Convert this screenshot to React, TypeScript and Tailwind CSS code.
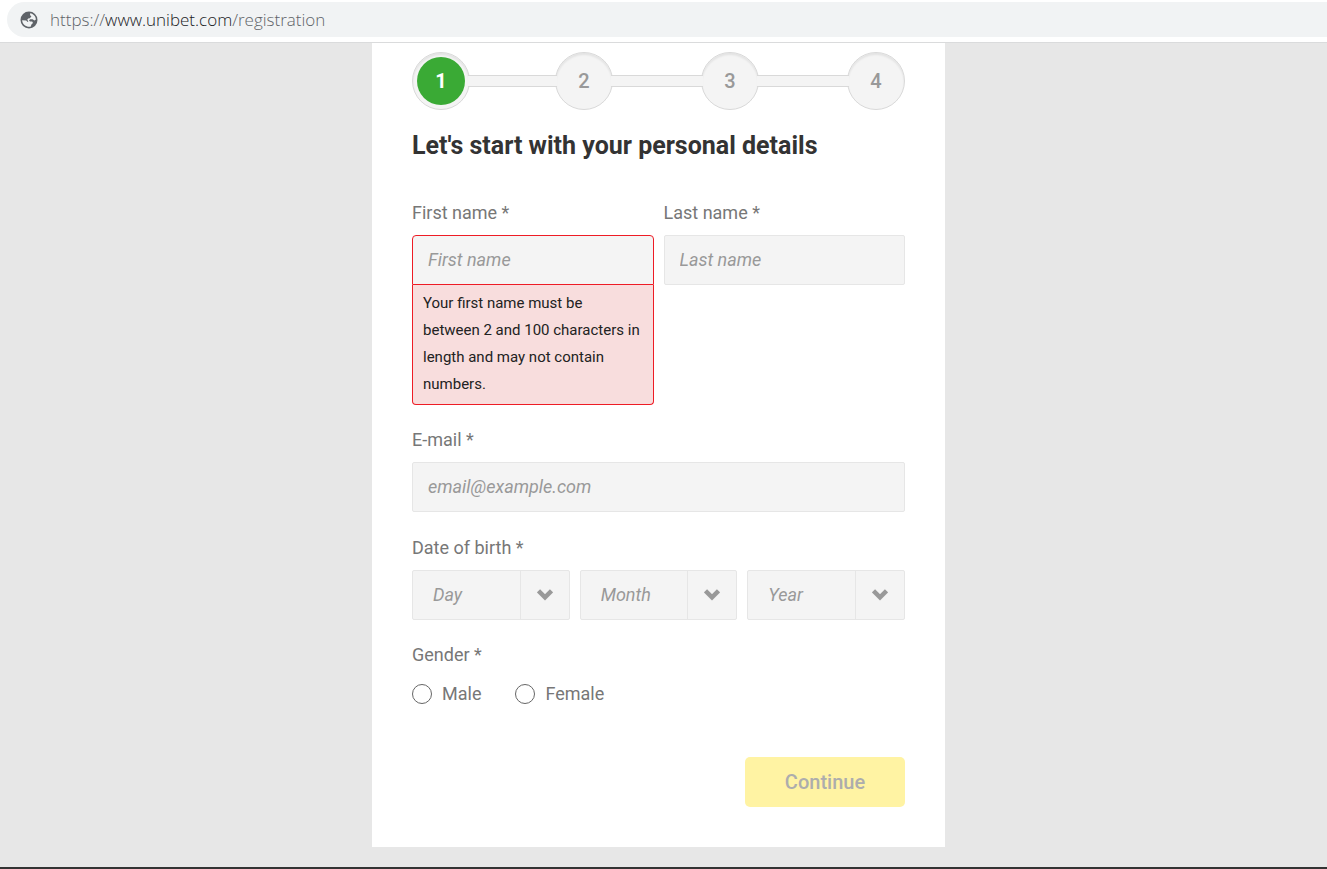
import React from 'react';

const labelClass = 'block mb-[9px] text-lg leading-[26px] text-[#777777]';
const inputClass =
  'block w-full h-[50px] pl-[15px] pr-4 pb-[2px] text-lg italic bg-[#f4f4f4] border text-[#333333] placeholder:text-[#999999] outline-none';

const steps = [
  { number: 1, active: true, line: 'grow-[85]' },
  { number: 2, active: false, line: 'grow-[88]' },
  { number: 3, active: false, line: 'grow-[88]' },
  { number: 4, active: false, line: '' }
];

const GlobeIcon: React.FC = () => (
  <svg width="20" height="20" viewBox="0 0 20 20" aria-hidden="true">
    <circle cx="10" cy="10" r="8.5" fill="#5f6368" />
    <path
      d="M11.2 3.2C14.4 3.7 16.8 6.4 16.9 9.6L15.4 10.4 13.6 9.2H11.2L10 10.4 11 11.6H13.2L14 13 12.6 14.2 11.6 16.7C7.4 17.4 3.4 14.4 3.1 10.2L7.2 10.4 8.6 12 9.4 11.2 8.2 9.8 9.2 8.6 10.8 8.2 12.4 6.4 11 5Z"
      fill="#f1f3f4"
    />
  </svg>
);

const AddressBar: React.FC = () => (
  <header className="pl-[7px] pt-[2px] pb-[5px] bg-white border-b border-[#dadbdc]">
    <div className="flex items-center h-[35px] pl-3 rounded-l-full bg-[#f1f3f4]">
      <GlobeIcon />
      <p className="ml-[11px] font-['Open_Sans','Noto_Sans',sans-serif] font-light text-[17px] text-[#5f6368]">
        https://<span className="text-[#202124]">www.unibet.com</span>/registration
      </p>
    </div>
  </header>
);

const Stepper: React.FC = () => (
  <ol className="flex items-center">
    {steps.map((step, index) => (
      <React.Fragment key={step.number}>
        <li
          className="flex items-center justify-center size-[58px] shrink-0 rounded-full border border-[#d9d9d9] bg-[#f4f4f4] shadow-[inset_0_2px_2px_rgba(0,0,0,0.07)]"
          aria-current={step.active ? 'step' : undefined}
        >
          <span
            className={`flex items-center justify-center size-12 rounded-full text-xl ${
              step.active ? 'bg-[#3aaa35] font-bold text-white' : 'font-medium text-[#999999]'
            }`}
          >
            {step.number}
          </span>
        </li>
        {index < steps.length - 1 && (
          <li
            aria-hidden="true"
            className={`relative basis-0 -mx-[2px] h-3 bg-[#f4f4f4] border-y border-[#d9d9d9] ${step.line}`}
          />
        )}
      </React.Fragment>
    ))}
  </ol>
);

const DateSelect: React.FC<{ name: string }> = ({ name }) => (
  <div className="relative">
    <select
      aria-label={name}
      className="block w-full h-[50px] pl-5 pr-[50px] appearance-none rounded-xs border border-[#e6e6e6] bg-[#f4f4f4] text-lg italic text-[#999999] outline-none"
    >
      <option>{name}</option>
    </select>
    {/* Arrow sits over the select */}
    <span className="absolute right-px inset-y-px flex items-center justify-center w-[49px] border-l border-[#e6e6e6] pointer-events-none">
      <svg width="16" height="12" viewBox="0 0 16 12" fill="none" stroke="#999999" strokeWidth="4.5">
        <path d="M1.5 1.8 8 8.3 14.5 1.8" />
      </svg>
    </span>
  </div>
);

const Registration: React.FC = () => (
  <form className="w-full max-w-[573px] mx-auto px-10 pt-[9px] pb-10 bg-white">
    <Stepper />

    <h1 className="mt-[21px] text-[25px] leading-[30px] font-bold text-[#333333]">
      Let's start with your personal details
    </h1>

    <div className="grid grid-cols-2 items-start gap-2.5 mt-[39px]">
      <div>
        <label htmlFor="first-name" className={labelClass}>First name *</label>
        <input
          id="first-name"
          type="text"
          placeholder="First name"
          aria-invalid="true"
          aria-describedby="first-name-error"
          className={`${inputClass} rounded-t border-[#ee1c25]`}
        />
        <p
          id="first-name-error"
          className="px-2.5 pt-[5px] pb-[6px] rounded-b border border-t-0 border-[#ee1c25] bg-[#f8dddd] text-[15px] leading-[27px] text-[#222222]"
        >
          Your first name must be between 2 and 100 characters in length and may not contain numbers.
        </p>
      </div>
      <div>
        <label htmlFor="last-name" className={labelClass}>Last name *</label>
        <input
          id="last-name"
          type="text"
          placeholder="Last name"
          className={`${inputClass} rounded-xs border-[#e6e6e6]`}
        />
      </div>
    </div>

    <div className="mt-[22px]">
      <label htmlFor="email" className={labelClass}>E-mail *</label>
      <input
        id="email"
        type="email"
        placeholder="email@example.com"
        className={`${inputClass} rounded-xs border-[#e6e6e6]`}
      />
    </div>

    <fieldset className="mt-[23px]">
      <legend className={labelClass}>Date of birth *</legend>
      <div className="grid grid-cols-3 gap-2.5">
        <DateSelect name="Day" />
        <DateSelect name="Month" />
        <DateSelect name="Year" />
      </div>
    </fieldset>

    <fieldset className="mt-[22px]">
      <legend className={labelClass}>Gender *</legend>
      <div className="flex gap-[34px] pt-1">
        {['Male', 'Female'].map((gender) => (
          <label key={gender} className="flex items-center gap-2.5 text-lg leading-[26px] text-[#777777]">
            <input
              type="radio"
              name="gender"
              value={gender}
              className="size-5 appearance-none rounded-full border border-[#666666] bg-white checked:border-[6px]"
            />
            {gender}
          </label>
        ))}
      </div>
    </fieldset>

    <div className="flex justify-end mt-[50px]">
      <button
        type="submit"
        disabled
        className="w-40 h-[50px] rounded-[5px] bg-[#fff3a3] text-xl font-medium text-[#adadad]"
      >
        Continue
      </button>
    </div>
  </form>
);

const App: React.FC = () => (
  <div className="flex flex-col min-h-screen bg-[#e7e7e7] border-b-2 border-[#333333] font-[Roboto,sans-serif]">
    <AddressBar />
    <main className="flex-1 pr-2.5 pb-5">
      <Registration />
    </main>
  </div>
);

export default App;
